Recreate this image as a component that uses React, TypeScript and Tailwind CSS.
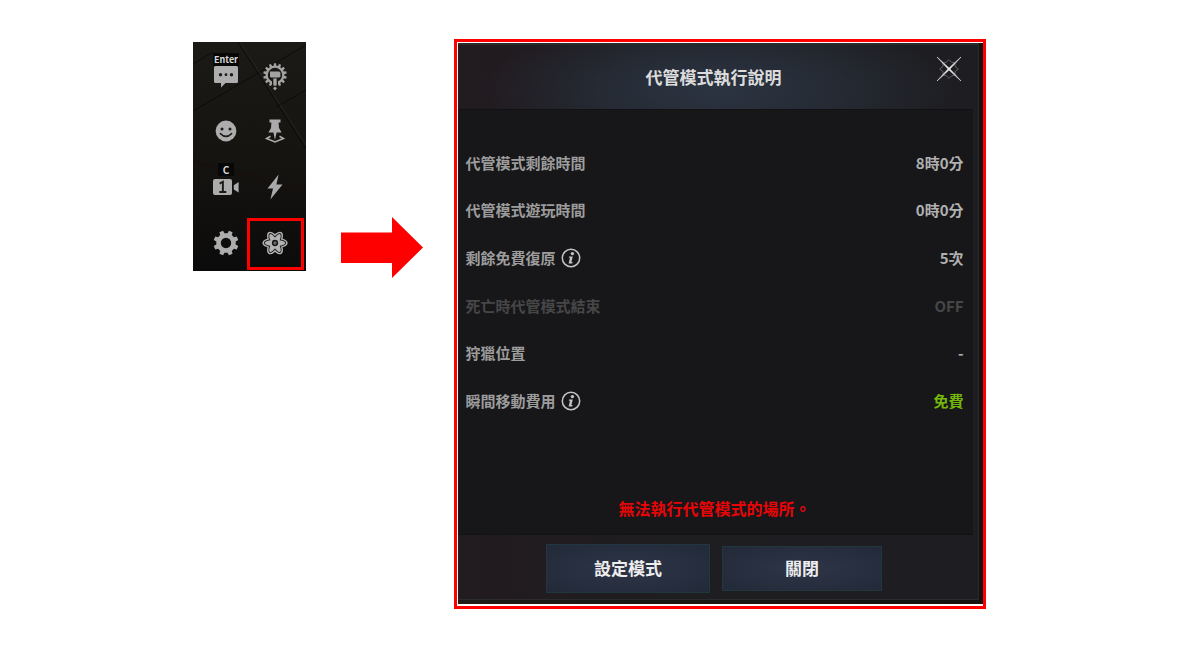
import React from 'react';

const polar = (r: number, a: number) =>
  `${(r * Math.cos(a)).toFixed(2)} ${(r * Math.sin(a)).toFixed(2)}`;

/** Closed outline of a cog with its centre at 0,0. */
function cog(teeth: number, inner: number, outer: number, base: number, tip: number) {
  const step = (Math.PI * 2) / teeth;
  const points: string[] = [];
  for (let i = 0; i < teeth; i++) {
    const a = i * step - Math.PI / 2;
    points.push(
      polar(inner, a - step * base),
      polar(outer, a - step * tip),
      polar(outer, a + step * tip),
      polar(inner, a + step * base),
    );
  }
  return `M${points.join('L')}Z`;
}

function KeyCap({ children }: { children: React.ReactNode }) {
  return (
    <span className="flex h-[13px] items-center justify-center bg-[#070707] px-px text-[9px] leading-[14px] font-bold text-[#d6d6d6]">
      {children}
    </span>
  );
}

function ChatIcon() {
  return (
    <svg width="24" height="22" viewBox="0 0 24 22" aria-hidden="true">
      <path d="M1.5 0H22.5Q24 0 24 1.5V15.5Q24 17 22.5 17H11.5L7 21.5V17H1.5Q0 17 0 15.5V1.5Q0 0 1.5 0Z" fill="#aeaeae" />
      <circle cx="6.5" cy="8.7" r="1.7" fill="#1b1b19" />
      <circle cx="12" cy="8.7" r="1.4" fill="#1b1b19" />
      <circle cx="17.5" cy="8.7" r="1.7" fill="#1b1b19" />
    </svg>
  );
}

function CraftIcon() {
  return (
    <svg width="24" height="28" viewBox="-12 -12 24 28" aria-hidden="true">
      <path
        fillRule="evenodd"
        fill="#a3a3a3"
        d={`${cog(14, 9.4, 11.8, 0.32, 0.2)}M7.2 0A7.2 7.2 0 1 0 -7.2 0A7.2 7.2 0 1 0 7.2 0Z`}
      />
      <path d="M-3 5H3V13H-3Z" fill="#161613" />
      <path d="M-5 -3.6H4.2L5.4 -2.2V1.4L4.4 2.6H-4.2L-5 1.6Z" fill="#a3a3a3" />
      <path d="M-1.7 3.4H1.7V10.6H-1.7Z" fill="#a3a3a3" />
      <path d="M0 11.4L2 13.2L0 15.4L-2 13.2Z" fill="#a3a3a3" />
    </svg>
  );
}

function SmileIcon() {
  return (
    <svg width="22" height="22" viewBox="-11 -11 22 22" aria-hidden="true">
      <circle r="10.4" fill="#adadad" />
      <circle cx="-4" cy="-2" r="1.5" fill="#1c1c1a" />
      <circle cx="4" cy="-2" r="1.5" fill="#1c1c1a" />
      <path d="M-5.6 2.6Q0 8.2 5.6 2.6" fill="none" stroke="#1c1c1a" strokeWidth="1.5" strokeLinecap="round" />
    </svg>
  );
}

function PinIcon() {
  return (
    <svg width="20" height="24" viewBox="0 0 20 24" aria-hidden="true">
      <path d="M4.5 0.5H15.5V3.5H13.6L14 9L16.6 13.5H11.6L10 21L8.4 13.5H3.4L6 9L6.4 3.5H4.5Z" fill="#ababab" />
      <path d="M5.5 17.2L1.5 19.6L10 23L18.5 19.6L14.5 17.2" fill="none" stroke="#ababab" strokeWidth="1.6" />
    </svg>
  );
}

function CameraIcon() {
  return (
    <svg width="28" height="16" viewBox="-1 0 28 16" aria-hidden="true">
      <rect width="19" height="16" rx="2" fill="#acacac" />
      <path d="M6.6 4.6L9.9 2.8V12.6M6.3 13H13.3" fill="none" stroke="#1a1a18" strokeWidth="1.9" />
      <path d="M20.8 6.2L25.6 3V13.4L20.8 10.4Z" fill="#acacac" />
    </svg>
  );
}

function BoltIcon() {
  return (
    <svg width="16" height="26" viewBox="0 0 16 26" aria-hidden="true">
      <path d="M11.6 0.5L0.5 14.6H6L3.4 25.5L15.5 10.6H9.4Z" fill="#a9a9a9" />
    </svg>
  );
}

function GearIcon() {
  return (
    <svg width="26" height="26" viewBox="-13 -13 26 26" aria-hidden="true">
      <path
        fillRule="evenodd"
        fill="#adadad"
        transform="rotate(22.5)"
        d={`${cog(8, 9.8, 12.6, 0.3, 0.2)}M5.2 0A5.2 5.2 0 1 0 -5.2 0A5.2 5.2 0 1 0 5.2 0Z`}
      />
    </svg>
  );
}

function AtomIcon() {
  const turns = [0, 60, 120];
  return (
    <svg width="28" height="26" viewBox="-14 -13 28 26" aria-hidden="true">
      {turns.map((t) => (
        <ellipse key={t} rx="11.4" ry="4.2" transform={`rotate(${t})`} fill="#b4b4b4" stroke="#b4b4b4" strokeWidth="2.4" />
      ))}
      {turns.map((t) => (
        <ellipse key={t} rx="11.2" ry="4.1" transform={`rotate(${t})`} fill="#1a1a1a" />
      ))}
      {turns.map((t) => (
        <ellipse key={t} rx="10.2" ry="3.1" transform={`rotate(${t})`} fill="#b4b4b4" />
      ))}
      <circle r="5" fill="#b4b4b4" />
      <circle r="2.4" fill="#6a6a6a" stroke="#181818" strokeWidth="1.5" />
    </svg>
  );
}

function Tool({ label, className, children }: { label: string; className?: string; children: React.ReactNode }) {
  return (
    <button
      type="button"
      aria-label={label}
      className={`relative flex h-14 flex-col items-center ${className ?? 'justify-center'}`}
    >
      {children}
    </button>
  );
}

function Toolbar() {
  return (
    <nav
      aria-label="快捷選單"
      className="relative mt-[3px] grid w-[113px] shrink-0 grid-cols-[49px_49px] overflow-hidden bg-linear-to-b from-[#1b1a17] via-[#151411] via-50% to-[#0c0b0b] pt-[5px] pl-[9px]"
    >
      <svg className="absolute inset-0" width="113" height="229" viewBox="0 0 113 229" aria-hidden="true">
        <g fill="none" stroke="#0c0c0a" strokeWidth="1">
          <path d="M45 0L113 107M0 69L50 40L113 3M83 65L113 48M0 22L20 10" />
          <path d="M0 120L60 134L113 152" stroke="#16100e" strokeWidth="3" />
        </g>
        <path d="M47 0L113 103" stroke="#24231f" fill="none" />
      </svg>
      <Tool label="聊天" className="justify-start pt-[6px]">
        <KeyCap>Enter</KeyCap>
        <ChatIcon />
      </Tool>
      <Tool label="製作" className="justify-start pt-4"><CraftIcon /></Tool>
      <Tool label="表情"><SmileIcon /></Tool>
      <Tool label="標記"><PinIcon /></Tool>
      <Tool label="鏡頭" className="justify-start gap-[3px] pt-1">
        <KeyCap>
          <span className="px-1 text-[10px]">C</span>
        </KeyCap>
        <CameraIcon />
      </Tool>
      <Tool label="快速"><BoltIcon /></Tool>
      <Tool label="設定"><GearIcon /></Tool>
      <Tool label="代管模式">
        <AtomIcon />
        <span className="absolute -inset-x-1 top-[3px] bottom-px border-3 border-[#fe0000]" />
      </Tool>
    </nav>
  );
}

function InfoIcon() {
  return (
    <svg width="20" height="20" viewBox="0 0 20 20" aria-hidden="true">
      <circle cx="10" cy="10" r="8.7" fill="none" stroke="#c4c4c4" strokeWidth="1.5" />
      <circle cx="11.4" cy="5.6" r="1.7" fill="#c4c4c4" />
      <path d="M8 8.4H11.8L10.4 14H11.6L11.2 15.4H7.6L9 9.8H7.8Z" fill="#c4c4c4" />
    </svg>
  );
}

type Row = { label: string; value: string; info?: boolean; tone?: 'muted' | 'free' };

const rows: Row[] = [
  { label: '代管模式剩餘時間', value: '8時0分' },
  { label: '代管模式遊玩時間', value: '0時0分' },
  { label: '剩餘免費復原', value: '5次', info: true },
  { label: '死亡時代管模式結束', value: 'OFF', tone: 'muted' },
  { label: '狩獵位置', value: '-' },
  { label: '瞬間移動費用', value: '免費', info: true, tone: 'free' },
];

function StatusRow({ label, value, info, tone }: Row) {
  const labelColor = tone === 'muted' ? 'text-[#464647]' : 'text-[#9c9c9c]';
  const valueColor =
    tone === 'muted' ? 'text-[#464647]' : tone === 'free' ? 'text-[#76b70c]' : 'text-[#b0b0b0]';
  return (
    <div className="flex items-center justify-between">
      <dt className={`flex items-center gap-[5px] ${labelColor}`}>
        {label}
        {info && (
          <button type="button" aria-label={`${label}說明`}>
            <InfoIcon />
          </button>
        )}
      </dt>
      <dd className={valueColor}>{value}</dd>
    </div>
  );
}

const actionClass =
  'border border-[#20373f] bg-radial from-[#2e3546] to-[#222939] text-[17px] leading-6 font-bold text-[#ededed]';

function Dialog() {
  return (
    <div className="min-w-0 max-w-[532px] flex-1 border-3 border-[#fe0000] bg-white pt-px pb-[2px] pl-px">
      <div className="bg-linear-to-r from-[#201d18] to-[#15130f] pr-[4px] pb-[4px]">
        <section
          role="dialog"
          aria-labelledby="dialog-title"
          className="border-t-2 border-r border-b border-t-[#2b2b2d] border-r-[#29292c] border-b-[#2b2b2d] bg-linear-to-r from-[#221b20] via-[#1e1d20] via-40% to-[#1e1e22]"
        >
          <header className="relative flex h-16 items-center justify-center bg-[radial-gradient(ellipse_45%_120%_at_50%_70%,#2c3442_0%,#262c36_45%,transparent_100%)]">
            <h1 id="dialog-title" className="pr-2 text-[17px] leading-6 font-bold text-[#dcdcdc]">
              代管模式執行說明
            </h1>
            <button type="button" aria-label="關閉視窗" className="absolute top-[11px] right-4">
              <svg width="26" height="26" viewBox="0 0 26 26" aria-hidden="true">
                <path d="M13 3.6L15.6 6.2L19 7V10.4L22.4 13L19 15.6V19L15.6 19.8L13 22.4L10.4 19.8L7 19V15.6L3.6 13L7 10.4V7L10.4 6.2Z" fill="none" stroke="#66666a" strokeWidth="0.9" />
                <path d="M1 1L13 12L25 1L14 13L25 25L13 14L1 25L12 13Z" fill="#e8e8e8" stroke="#c9c9c9" strokeWidth="0.8" />
              </svg>
            </button>
          </header>
          <div className="mr-[5px] flex flex-col border-y border-[#121214] bg-[#171719] pt-[29px] pr-[9px] pb-[14px] pl-2">
            <dl className="grid h-[286px] auto-rows-fr text-[15px] leading-6 font-bold">
              {rows.map((row) => (
                <StatusRow key={row.label} {...row} />
              ))}
            </dl>
            <p className="mt-[71px] text-center text-[16px] leading-6 font-bold text-[#e80508]">
              無法執行代管模式的場所。
            </p>
          </div>
          <footer className="flex h-16 items-center justify-center gap-3 pt-0.5 pr-[7px]">
            <button type="button" className={`h-[49px] w-[164px] ${actionClass}`}>
              設定模式
            </button>
            <button type="button" className={`h-[45px] w-[160px] ${actionClass}`}>
              關閉
            </button>
          </footer>
        </section>
      </div>
    </div>
  );
}

export default function App() {
  return (
    <main
      lang="zh-Hant"
      className="flex min-h-screen items-start justify-center bg-white pt-[39px] pr-0.5 font-['Noto_Sans_CJK_TC','Noto_Sans',sans-serif]"
    >
      <Toolbar />
      <svg className="mt-[178px] ml-[35px] mr-[31px] shrink-0" width="82" height="61" viewBox="0 0 82 61" aria-hidden="true">
        <path d="M0 15.5H51V0L82 30.5L51 61V46H0Z" fill="#fe0000" />
      </svg>
      <Dialog />
    </main>
  );
}
